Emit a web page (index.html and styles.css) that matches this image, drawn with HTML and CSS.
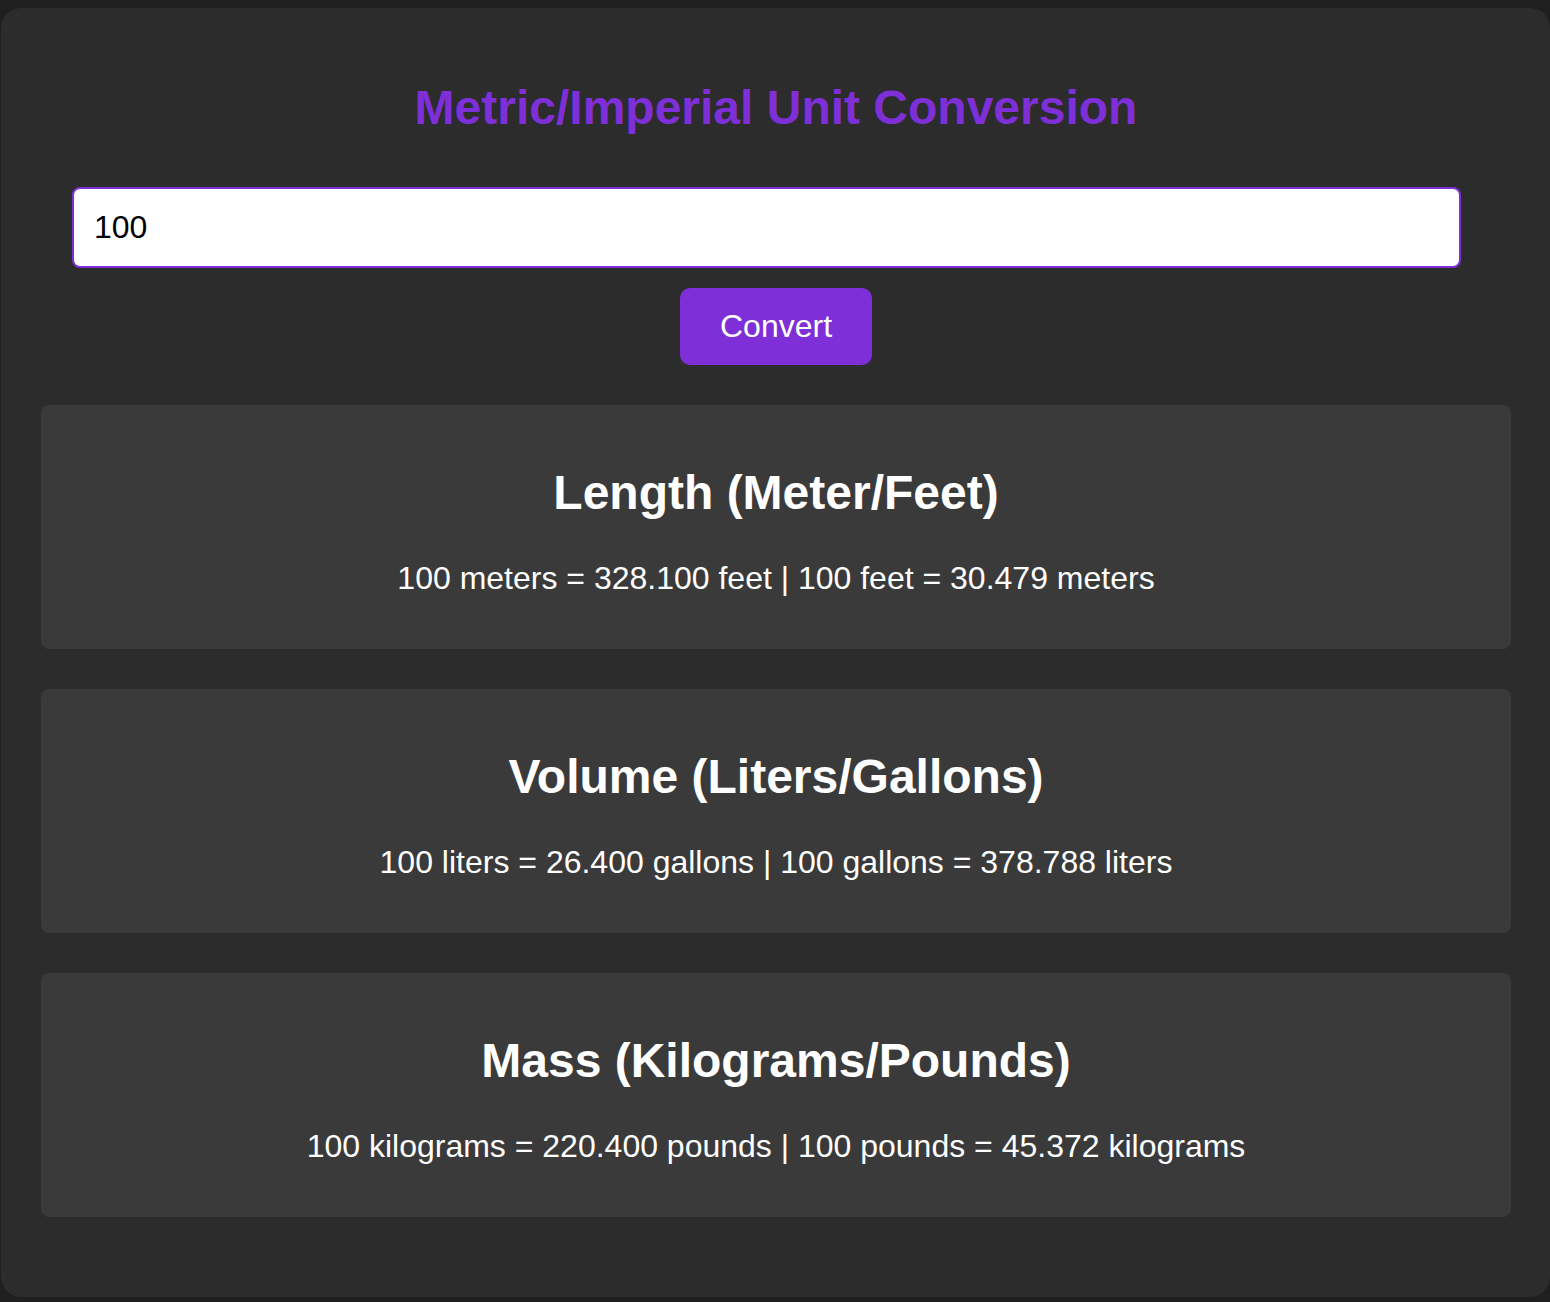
FILE: index.html
```html
<!DOCTYPE html>
<html lang="en">
<head>
<meta charset="utf-8">
<title>Metric/Imperial Unit Conversion</title>
<link rel="stylesheet" href="styles.css">
</head>
<body>
<main class="app">
  <h1 class="app-title">Metric/Imperial Unit Conversion</h1>
  <input class="value-input" type="text" value="100">
  <div class="actions">
    <button class="convert-btn" type="button">Convert</button>
  </div>
  <section class="card">
    <h2 class="card-title">Length (Meter/Feet)</h2>
    <p class="card-text">100 meters = 328.100 feet | 100 feet = 30.479 meters</p>
  </section>
  <section class="card">
    <h2 class="card-title">Volume (Liters/Gallons)</h2>
    <p class="card-text">100 liters = 26.400 gallons | 100 gallons = 378.788 liters</p>
  </section>
  <section class="card">
    <h2 class="card-title">Mass (Kilograms/Pounds)</h2>
    <p class="card-text">100 kilograms = 220.400 pounds | 100 pounds = 45.372 kilograms</p>
  </section>
</main>
</body>
</html>
```

FILE: styles.css
```css
html {
  background: #1f1f1f;
}

body {
  margin: 8px 0 0 1px;
  font-family: "Liberation Sans", Arial, Helvetica, sans-serif;
  font-size: 32px;
  color: #ffffff;
}

.app {
  box-sizing: border-box;
  width: 1549px;
  padding: 40px 39px 40px 40px;
  background: #2c2c2c;
  border-radius: 20px;
}

.app-title {
  margin: 32px 0;
  font-size: 48px;
  font-weight: 700;
  color: #7e2fd8;
  text-align: center;
}

.value-input {
  display: block;
  box-sizing: border-box;
  width: 1389px;
  margin: 52px 0 20px 31px;
  padding: 20px;
  font-family: inherit;
  font-size: 32px;
  line-height: 37px;
  color: #000000;
  background: #ffffff;
  border: 2px solid #7e2fd8;
  border-radius: 8px;
  outline: none;
}

.actions {
  display: flex;
  justify-content: center;
}

.convert-btn {
  padding: 20px 40px;
  font-family: inherit;
  font-size: 32px;
  line-height: 37px;
  color: #ffffff;
  background: #7e2fd8;
  border: none;
  border-radius: 10px;
}

.card {
  margin: 40px 0;
  padding: 20px;
  background: #3a3a3a;
  border-radius: 8px;
  text-align: center;
}

.card-title {
  margin: 40px 0;
  font-size: 48px;
  font-weight: 700;
}

.card-text {
  margin: 32px 0;
  font-size: 32px;
}
```
